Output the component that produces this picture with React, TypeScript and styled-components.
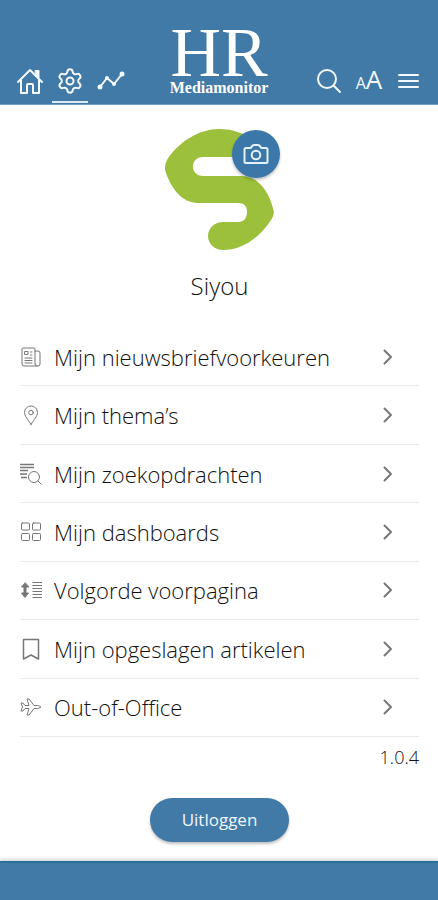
import React from "react";
import styled, { createGlobalStyle } from "styled-components";
import { Settings } from "lucide-react";

const BLUE = "#4179a7";

const GlobalStyle = createGlobalStyle`
  *, *::before, *::after { box-sizing: border-box; }
  body {
    margin: 0;
    background: #fff;
    color: #111;
    font-family: "Open Sans", "Noto Sans", sans-serif;
    font-weight: 350;
  }
  button { font: inherit; border: 0; cursor: pointer; }
`;

const Page = styled.div`
  display: flex;
  flex-direction: column;
  min-height: 100vh;
`;

const Header = styled.header`
  display: grid;
  grid-template-columns: 1fr auto 1fr;
  align-items: end;
  height: 105px;
  padding: 0 13px;
  background: ${BLUE};
  color: #f4f9fd;
  border-bottom: 1px solid #6f9cbe;
`;

const Tools = styled.nav<{ $end?: boolean }>`
  display: flex;
  gap: 5px;
  justify-content: ${(p) => (p.$end ? "flex-end" : "flex-start")};
`;

const Tool = styled.button<{ $width: number; $active?: boolean }>`
  display: flex;
  align-items: center;
  justify-content: center;
  width: ${(p) => p.$width}px;
  height: 42px;
  padding: 0;
  background: none;
  color: inherit;
  border-bottom: 2px solid ${(p) => (p.$active ? "#dbe9f4" : "transparent")};
  margin-bottom: 1px;
  svg { flex: none; }
`;

const Brand = styled.a`
  display: flex;
  flex-direction: column;
  align-items: center;
  padding-bottom: 8px;
  color: #fff;
  font-family: "Liberation Serif", serif;
  text-decoration: none;
`;

const BrandInitials = styled.span`
  font-size: 70px;
  font-weight: 400;
  line-height: 54px;
`;

const BrandName = styled.span`
  font-size: 16px;
  font-weight: 700;
  line-height: 16px;
`;

const Main = styled.main`
  display: flex;
  flex: 1;
  flex-direction: column;
  padding: 24px 19px 19px 20px;
`;

const Profile = styled.section`
  display: flex;
  flex-direction: column;
  align-items: center;
`;

const Avatar = styled.div`
  position: relative;
  width: 110px;
  height: 123px;
`;

const PhotoButton = styled.button`
  position: absolute;
  top: 1px;
  right: -5px;
  display: grid;
  place-items: center;
  width: 48px;
  height: 48px;
  padding: 0;
  border-radius: 50%;
  background: #3b77a8;
  color: #e3f1fc;
  box-shadow: 0 2px 3px rgba(0, 0, 0, 0.25);
`;

const Name = styled.h1`
  margin: 17px 0 25px;
  font-size: 24px;
  font-weight: inherit;
  line-height: 34px;
`;

const Menu = styled.ul`
  display: grid;
  flex: 1;
  grid-auto-rows: 1fr;
  margin: 0;
  padding: 0;
  list-style: none;
`;

const MenuItem = styled.li`
  display: flex;
  border-bottom: 1px solid #e9e9e9;
`;

const MenuLink = styled.a`
  display: grid;
  flex: 1;
  grid-template-columns: 22px 1fr 24px;
  gap: 12px;
  align-items: center;
  min-height: 48px;
  padding-right: 19px;
  color: inherit;
  font-size: 22px;
  line-height: 30px;
  text-decoration: none;
  svg { color: #777; }
`;

const Version = styled.p`
  margin: 8px 0 29px;
  font-size: 18px;
  line-height: 24px;
  text-align: right;
`;

const LogoutButton = styled.button`
  align-self: center;
  height: 44px;
  padding: 0 32px 2px;
  border-radius: 22px;
  background: ${BLUE};
  color: #f0f7fc;
  font-size: 17px;
  font-weight: 400;
  box-shadow: 0 2px 3px rgba(0, 0, 0, 0.25);
`;

const Footer = styled.footer`
  height: 39px;
  background: ${BLUE};
  border-top: 2px solid #25719a;
  box-shadow: 0 -2px 3px rgba(0, 0, 0, 0.15);
`;

type IconProps = { w?: number; h?: number; sw?: number; children: React.ReactNode };

const Icon = ({ w = 22, h = 22, sw = 1, children }: IconProps) => (
  <svg
    width={w}
    height={h}
    viewBox={`0 0 ${w} ${h}`}
    fill="none"
    stroke="currentColor"
    strokeWidth={sw}
    strokeLinecap="round"
    strokeLinejoin="round"
    aria-hidden="true"
  >
    {children}
  </svg>
);

const HomeIcon = () => (
  <Icon w={28} h={28} sw={2}>
    <path d="M2 15 14 3l12 12" />
    <path d="M19.500 3.500h3.500v7l-3.500-3.500z" fill="currentColor" strokeWidth="1" />
    <path d="M5 13v13h6v-8q0-1 1-1h4q1 0 1 1v8h6V13" />
  </Icon>
);

const TrendIcon = () => (
  <Icon w={28} h={28} sw={2}>
    <path d="M3 20l7-9 7 6 8-10" />
    <g fill="currentColor" stroke="none">
      <circle cx="3" cy="20" r="2.500" />
      <circle cx="10" cy="11" r="2" />
      <circle cx="17" cy="17" r="2" />
      <circle cx="25" cy="7" r="2.500" />
    </g>
  </Icon>
);

const SearchIcon = () => (
  <Icon w={26} h={26} sw={2}>
    <circle cx="10" cy="11" r="9" />
    <path d="M16.500 17.500 23 24" />
  </Icon>
);

const MenuIcon = () => (
  <Icon w={22} h={22} sw={2}>
    <path d="M2 5h19M2 11h19M2 17h19" />
  </Icon>
);

const TextSize = styled.span`
  display: flex;
  align-items: baseline;
  font-size: 26px;
  font-weight: 500;
  line-height: 34px;
  small { font-size: 16px; }
`;

const CameraIcon = () => (
  <Icon w={26} h={22} sw={2}>
    <path d="M3 5h4c2 0 1.500-3 4-3h4c2.500 0 2 3 4 3h4q1.500 0 1.500 1.500v12q0 1.500-1.500 1.500H3q-1.500 0-1.500-1.500v-12Q1.500 5 3 5z" />
    <circle cx="13" cy="12" r="4.300" />
  </Icon>
);

const Logo = () => (
  <svg width="110" height="123" viewBox="0 0 110 123" role="img" aria-label="Siyou">
    <path
      fill="#9dc03c"
      d="M54 0C69 0 82 5 92 14L86 28H38C32 28 28 32 28 37.500S32 47 38 47H76C92 47 103 60 108.500 81C109.500 85 108 88 106 91C95 109 76 121 58 121C50 121 43 115 43 107S50 93 58 93H73C79 93 82 89 82 83S79 74 73 74H33C17 74 6 59 1 44C-1 39 0 35 2 31C14 12 35 0 54 0Z"
    />
  </svg>
);

const ChevronIcon = () => (
  <Icon w={24} h={22} sw={2}>
    <path d="M8.500 4.500 15 11l-6.500 6.500" />
  </Icon>
);

const NewsIcon = () => (
  <Icon>
    <path d="M15 18V3q0-1-1-1H3Q2 2 2 3v15q0 2 2 2h14q2 0 2-2V7q0-2-2-2h-3M15 18q0 2 2 2" />
    <path d="M5 5.500h3v3H5zM10.500 6H12M10.500 9H12M5 12h7M5 14.500h7M5 17h7" />
  </Icon>
);

const PinIcon = () => (
  <Icon>
    <path d="M11 20.500C8 15.500 4.500 12 4.500 8.500a6.500 6.500 0 0 1 13 0C17.500 12 14 15.500 11 20.500z" />
    <circle cx="11" cy="8.500" r="2.300" />
  </Icon>
);

const SearchListIcon = () => (
  <Icon>
    <path d="M0 1.500h14M0 4.500h14M0 7.500h8M0 11h7M1 14.500h6" strokeLinecap="butt" strokeWidth="1.300" />
    <circle cx="14" cy="14" r="5.500" />
    <path d="m18 18 3 3" />
  </Icon>
);

const GridIcon = () => (
  <Icon>
    <rect x="1.500" y="2" width="8" height="7" rx="1" />
    <rect x="12.500" y="2" width="8" height="7" rx="1" />
    <rect x="1.500" y="12.500" width="8" height="7" rx="1" />
    <rect x="12.500" y="12.500" width="8" height="7" rx="1" />
  </Icon>
);

const OrderIcon = () => (
  <Icon>
    <path d="M5 4 1.500 8H4v6H1.500L5 18.500 8.500 14H6V8h2.500z" fill="currentColor" />
    <path d="M12.500 3.500H22M12.500 6.500H22M12.500 9.500H22M12.500 12.500H22M12.500 15.500H22M12.500 18.500H22" strokeLinecap="butt" />
  </Icon>
);

const BookmarkIcon = () => (
  <Icon>
    <path d="M3.500 1.500h15V21L11 17l-7.500 4z" strokeWidth="1.500" />
  </Icon>
);

const PlaneIcon = () => (
  <Icon>
    <path d="M20.500 11c0-1-2-1.500-3-1.500h-3.500L9 3H7l2 6.500H5L3 7H1l1.500 4L1 15h2l2-2.500h4L7 19h2l5-6.500h3.500c1 0 3-.500 3-1.500z" />
  </Icon>
);

const items = [
  { label: "Mijn nieuwsbriefvoorkeuren", icon: <NewsIcon /> },
  { label: "Mijn thema’s", icon: <PinIcon /> },
  { label: "Mijn zoekopdrachten", icon: <SearchListIcon /> },
  { label: "Mijn dashboards", icon: <GridIcon /> },
  { label: "Volgorde voorpagina", icon: <OrderIcon /> },
  { label: "Mijn opgeslagen artikelen", icon: <BookmarkIcon /> },
  { label: "Out-of-Office", icon: <PlaneIcon /> },
];

export default function App() {
  return (
    <Page>
      <GlobalStyle />
      <Header>
        <Tools>
          <Tool $width={34} aria-label="Home"><HomeIcon /></Tool>
          <Tool $width={36} $active aria-label="Instellingen"><Settings size={28} strokeWidth={1.7} /></Tool>
          <Tool $width={36} aria-label="Trends"><TrendIcon /></Tool>
        </Tools>
        <Brand href="#">
          <BrandInitials>HR</BrandInitials>
          <BrandName>Mediamonitor</BrandName>
        </Brand>
        <Tools $end>
          <Tool $width={34} aria-label="Zoeken"><SearchIcon /></Tool>
          <Tool $width={34} aria-label="Tekstgrootte">
            <TextSize><small>A</small>A</TextSize>
          </Tool>
          <Tool $width={34} aria-label="Menu"><MenuIcon /></Tool>
        </Tools>
      </Header>
      <Main>
        <Profile>
          <Avatar>
            <Logo />
            <PhotoButton aria-label="Foto wijzigen"><CameraIcon /></PhotoButton>
          </Avatar>
          <Name>Siyou</Name>
        </Profile>
        <Menu>
          {items.map((item) => (
            <MenuItem key={item.label}>
              <MenuLink href="#">
                {item.icon}
                <span>{item.label}</span>
                <ChevronIcon />
              </MenuLink>
            </MenuItem>
          ))}
        </Menu>
        <Version>1.0.4</Version>
        <LogoutButton>Uitloggen</LogoutButton>
      </Main>
      <Footer />
    </Page>
  );
}
